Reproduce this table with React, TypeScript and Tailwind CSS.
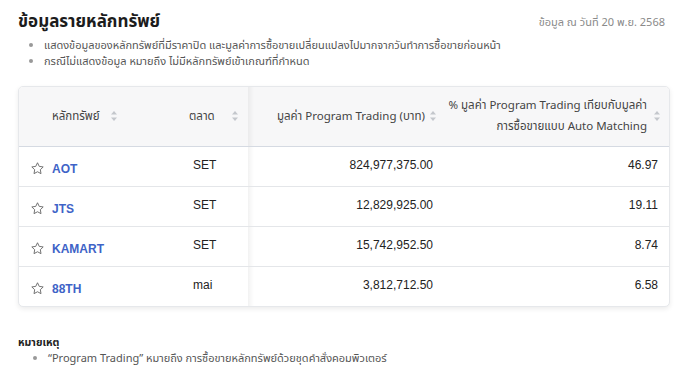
import React from 'react';

type Row = { symbol: string; market: string; value: string; percent: string };

const rows: Row[] = [
  { symbol: 'AOT', market: 'SET', value: '824,977,375.00', percent: '46.97' },
  { symbol: 'JTS', market: 'SET', value: '12,829,925.00', percent: '19.11' },
  { symbol: 'KAMART', market: 'SET', value: '15,742,952.50', percent: '8.74' },
  { symbol: '88TH', market: 'mai', value: '3,812,712.50', percent: '6.58' },
];

const thai = "font-['Noto_Sans_Thai','Noto_Sans','Liberation_Sans',sans-serif]";
const arial = "font-['Liberation_Sans',Arial,sans-serif]";

const SortIcon = () => (
  <svg width="8" height="12" viewBox="0 0 8 12" className="shrink-0">
    <path d="M4 1 L7 4.5 H1 Z" fill="#c4c7cc" />
    <path d="M4 11 L7 7.5 H1 Z" fill="#c4c7cc" />
  </svg>
);

const Star = () => (
  <svg width="15" height="15" viewBox="0 0 24 24" fill="none" stroke="#6b6b6b" strokeWidth="1.5" strokeLinejoin="round">
    <path d="M12 2.8l2.8 5.8 6.3.9-4.6 4.4 1.1 6.3L12 17.2l-5.6 3 1.1-6.3-4.6-4.4 6.3-.9z" />
  </svg>
);

const stickyEdge =
  "relative after:content-[''] after:absolute after:top-0 after:bottom-0 after:right-[-6px] after:w-[6px] after:bg-gradient-to-r after:from-black/[0.05] after:to-transparent";

const App: React.FC = () => {
  return (
    <div className={`w-[682px] h-[377px] bg-white pl-[18px] pr-[12px] pt-[9px] text-[#333] ${thai}`}>
      <div className="flex items-start justify-between">
        <h1 className="text-[17px] font-bold text-[#1c1c1c] leading-[26px]">ข้อมูลรายหลักทรัพย์</h1>
        <span className="text-[11px] text-[#8a8a8a] mr-[5px] mt-[6px]">ข้อมูล ณ วันที่ 20 พ.ย. 2568</span>
      </div>

      <ul className="mt-[3px] pl-[26px] list-disc text-[11px] leading-[16px] text-[#555] marker:text-[#999]">
        <li>แสดงข้อมูลของหลักทรัพย์ที่มีราคาปิด และมูลค่าการซื้อขายเปลี่ยนแปลงไปมากจากวันทำการซื้อขายก่อนหน้า</li>
        <li>กรณีไม่แสดงข้อมูล หมายถึง ไม่มีหลักทรัพย์เข้าเกณฑ์ที่กำหนด</li>
      </ul>

      <div className="mt-[16px] rounded-[5px] border border-[#e6e8eb] bg-white shadow-[0_2px_5px_rgba(0,0,0,0.08)] overflow-hidden">
        <table className="w-full border-collapse text-[12px]">
          <thead>
            <tr className="bg-[#f7f7f8] border-b border-[#d5dae2] h-[59px] text-[#444] text-[11.5px]">
              <th className="w-[162px] pl-[33px] pr-[12px] font-normal text-left">
                <div className="flex items-center gap-[10px]">
                  <span>หลักทรัพย์</span>
                  <SortIcon />
                </div>
              </th>
              <th className={`w-[67px] pl-[8px] pr-[9px] font-normal text-left ${stickyEdge}`}>
                <div className="flex items-center justify-between">
                  <span>ตลาด</span>
                  <SortIcon />
                </div>
              </th>
              <th className="w-[200px] pr-[11px] font-normal text-right">
                <div className="flex items-center justify-end gap-[4px]">
                  <span className="whitespace-nowrap">มูลค่า Program Trading (บาท)</span>
                  <SortIcon />
                </div>
              </th>
              <th className="pr-[8px] font-normal text-right">
                <div className="flex items-center justify-end gap-[6px]">
                  <span className="leading-[21px] whitespace-nowrap">
                    % มูลค่า Program Trading เทียบกับมูลค่า
                    <br />
                    การซื้อขายแบบ Auto Matching
                  </span>
                  <SortIcon />
                </div>
              </th>
            </tr>
          </thead>
          <tbody className={`${arial} text-[#222]`}>
            {rows.map((r, i) => (
              <tr key={r.symbol} className={`h-[40px] ${i < rows.length - 1 ? 'border-b border-[#e4e6e9]' : ''}`}>
                <td className="pl-[11px] pt-[5px] align-middle">
                  <div className="flex items-center gap-[7px]">
                    <Star />
                    <span className="font-bold text-[#3e63c7]">{r.symbol}</span>
                  </div>
                </td>
                <td className={`pl-[12px] align-top pt-[9px] ${stickyEdge}`}>{r.market}</td>
                <td className="pr-[15px] text-right align-top pt-[9px]">{r.value}</td>
                <td className="pr-[11px] text-right align-top pt-[9px]">{r.percent}</td>
              </tr>
            ))}
          </tbody>
        </table>
      </div>

      <div className="mt-[28px] text-[10.5px] font-bold text-[#222] leading-[16px]">หมายเหตุ</div>
      <ul className="pl-[30px] list-disc text-[11px] leading-[16px] text-[#555] marker:text-[#999]">
        <li>“Program Trading” หมายถึง การซื้อขายหลักทรัพย์ด้วยชุดคำสั่งคอมพิวเตอร์</li>
      </ul>
    </div>
  );
};

export default App;
